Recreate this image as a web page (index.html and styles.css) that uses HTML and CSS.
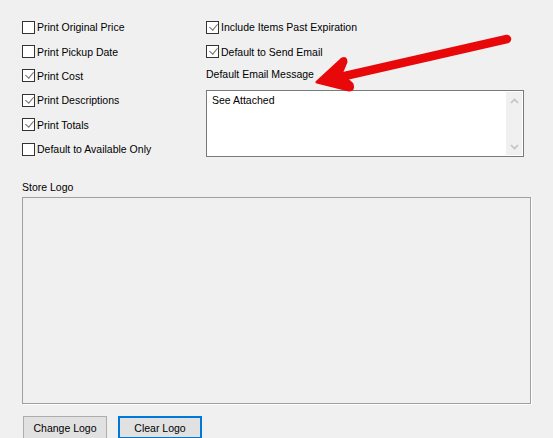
FILE: index.html
```html
<!DOCTYPE html>
<html lang="en">
<head>
    <meta charset="UTF-8">
    <title>Report Options</title>
    <link rel="stylesheet" href="styles.css">
</head>
<body>
    <div class="panel">
        <div class="options">
            <div class="col col-left">
                <label class="check"><span class="box"></span>Print Original Price</label>
                <label class="check"><span class="box"></span>Print Pickup Date</label>
                <label class="check"><span class="box checked"></span>Print Cost</label>
                <label class="check"><span class="box checked"></span>Print Descriptions</label>
                <label class="check"><span class="box checked"></span>Print Totals</label>
                <label class="check"><span class="box"></span>Default to Available Only</label>
            </div>
            <div class="col col-right">
                <label class="check"><span class="box checked"></span>Include Items Past Expiration</label>
                <label class="check"><span class="box checked"></span>Default to Send Email</label>
                <div class="field-label">Default Email Message</div>
                <div class="memo">
                    <div class="memo-text">See Attached</div>
                    <div class="scrollbar">
                        <svg width="15" height="10" viewBox="0 0 15 10"><path d="M4 7 L7.5 3.5 L11 7" fill="none" stroke="#c2c2c2" stroke-width="1.6"/></svg>
                        <svg width="15" height="10" viewBox="0 0 15 10"><path d="M4 3 L7.5 6.5 L11 3" fill="none" stroke="#c2c2c2" stroke-width="1.6"/></svg>
                    </div>
                </div>
            </div>
        </div>

        <div class="logo-label">Store Logo</div>
        <div class="logo-box"></div>

        <div class="buttons">
            <button class="btn">Change Logo</button>
            <button class="btn btn-focus">Clear Logo</button>
        </div>
    </div>

    <!-- callout pointing at the email message field -->
    <svg class="callout" width="553" height="438" viewBox="0 0 553 438">
        <line x1="336" y1="78" x2="507" y2="39" stroke="#e8080a" stroke-width="8.5" stroke-linecap="round"/>
        <path d="M317 82 L342 59 Q346 57 346 62 L341 74 L352 84 Q354 90 349 90 Z" fill="#e8080a" stroke="#e8080a" stroke-width="3" stroke-linejoin="round"/>
    </svg>
</body>
</html>
```

FILE: styles.css
```css
html, body {
    margin: 0;
    height: 100%;
    overflow: hidden;
}
body {
    background: #f0f0f0;
    font-family: "Liberation Sans", Arial, sans-serif;
    font-size: 10.5px;
    color: #000;
    position: relative;
}
.panel {
    padding: 15px 0 0 22px;
}
.options {
    display: flex;
}
.col-left {
    width: 184px;
}
.col-right {
    width: 318px;
}
.check {
    display: flex;
    align-items: center;
    height: 24.4px;
}
.box {
    width: 11px;
    height: 11px;
    border: 1px solid #333;
    background: #fff;
    margin-right: 2px;
    position: relative;
    flex-shrink: 0;
}
.box.checked::after {
    content: '';
    position: absolute;
    left: 3.5px;
    top: 0;
    width: 4px;
    height: 7px;
    border: solid #707070;
    border-width: 0 1.5px 1.5px 0;
    transform: rotate(40deg);
}
.field-label {
    height: 23px;
    line-height: 15px;
    padding-top: 3px;
}
.memo {
    display: flex;
    height: 65px;
    border: 1px solid #7a7a7a;
    background: #fff;
}
.memo-text {
    flex: 1;
    padding: 3px 5px;
}
.scrollbar {
    width: 16px;
    margin: 1px 1px 1px 0;
    background: #f0f0f0;
    display: flex;
    flex-direction: column;
    justify-content: space-between;
    align-items: center;
    padding: 4px 0 3px;
}
.scrollbar svg {
    display: block;
}
.logo-label {
    margin-top: 20px;
    height: 16px;
}
.logo-box {
    width: 507px;
    height: 205px;
    border: 1px solid #a0a0a0;
    box-shadow: 1px 1px 0 #fff;
}
.buttons {
    display: flex;
    gap: 11px;
    margin-top: 12px;
}
.btn {
    font-family: inherit;
    font-size: 10.5px;
    width: 84px;
    height: 23px;
    background: #e1e1e1;
    border: 1px solid #adadad;
    padding: 0;
    margin-left: 1px;
}
.btn-focus {
    border: 2px solid #0078d7;
    margin-left: 0;
}
.callout {
    position: absolute;
    left: 0;
    top: 0;
    pointer-events: none;
}
```
